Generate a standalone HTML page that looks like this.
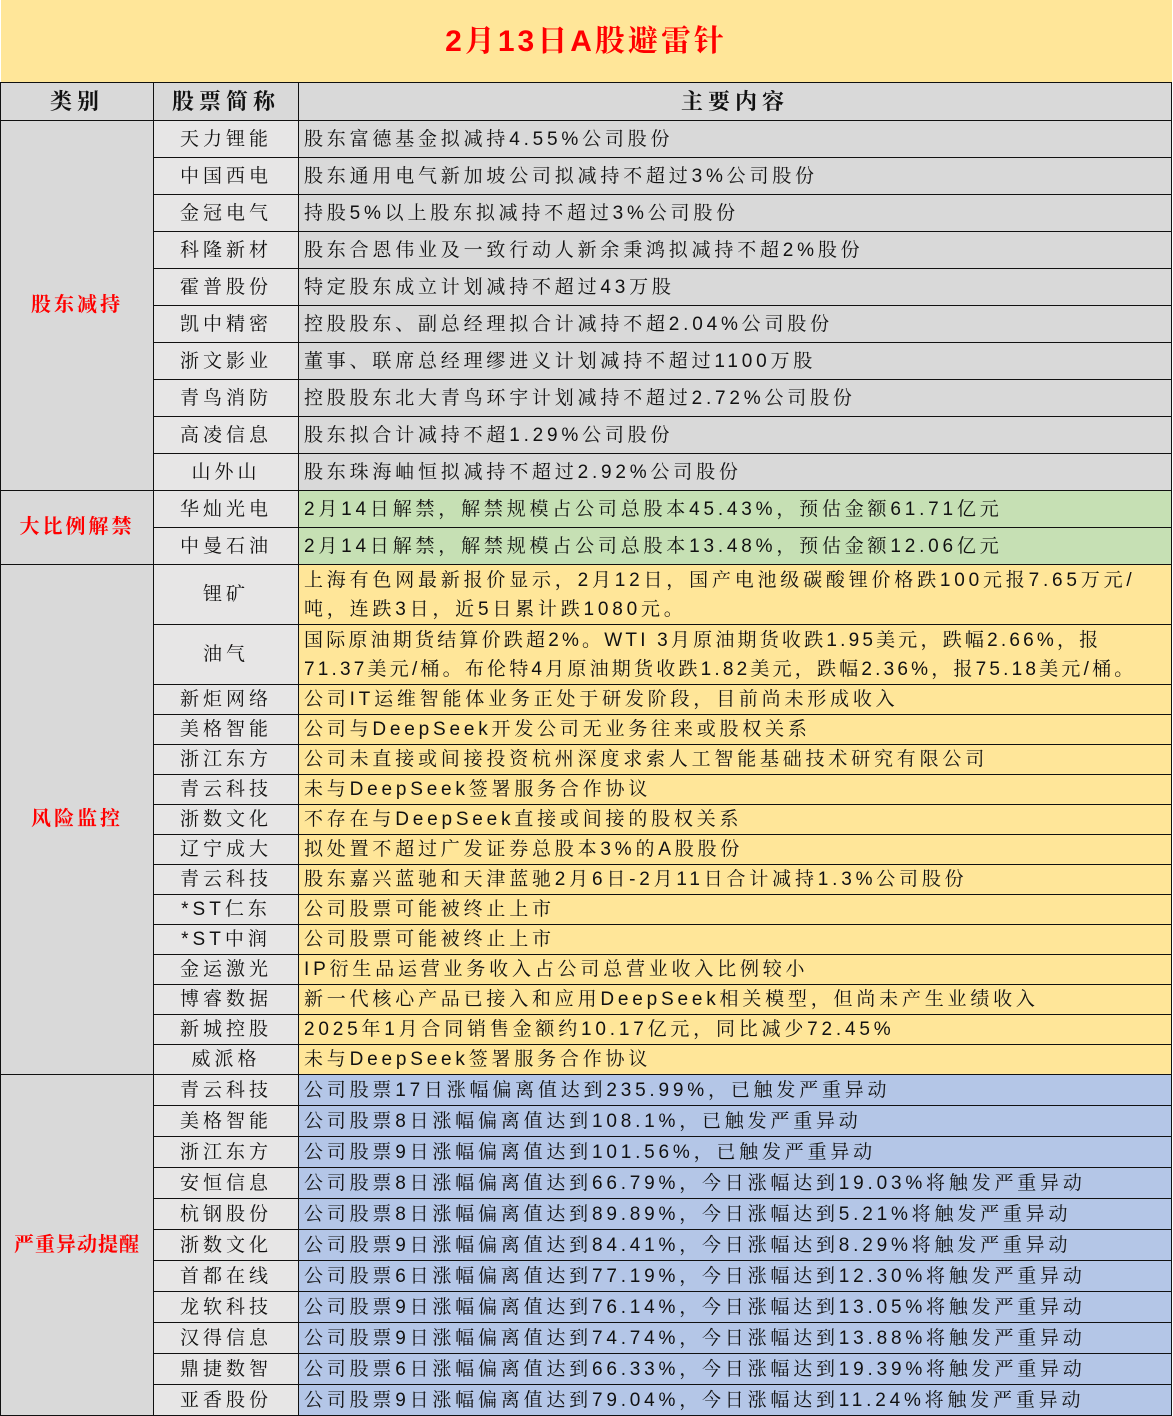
<!DOCTYPE html><html><head><meta charset="utf-8"><style>
body{margin:0;background:#fff;width:1173px;height:1415px;overflow:hidden}
table{border-collapse:collapse;table-layout:fixed;width:1172px;font-family:"Liberation Sans","Noto Serif CJK SC",serif;font-size:19px;color:#111}
td{border:1.5px solid #111;padding:0;white-space:nowrap;overflow:hidden;letter-spacing:3.8px;line-height:29px}
.c1{background:#D9D9D9;color:#f00;font-weight:bold;text-align:center;font-size:20px;letter-spacing:3px}
.c2{background:#E7E6E6;text-align:center;letter-spacing:4px}
.c3{padding-left:5px}
.g{background:#D9D9D9}.gr{background:#C6E0B4}.y{background:#FFE699}.b{background:#B4C6E7}
.t{background:#FFE699;color:#f00;font-weight:bold;font-size:30px;text-align:center;border-top:none;border-left:none;border-right:none;letter-spacing:3px}
.h td{background:#D9D9D9;font-weight:bold;font-size:22px;text-align:center;letter-spacing:5px}
.r37 td{height:36px}.r30 td{height:28.6px}.r31 td{height:30px}.r60 td{height:59px}
</style></head><body><table>
<colgroup><col style="width:153px"><col style="width:145px"><col></colgroup>
<tr><td colspan="3" class="t" style="height:82px">2月13日A股避雷针</td></tr>
<tr class="h"><td style="height:37px">类别</td><td>股票简称</td><td>主要内容</td></tr>
<tr class="r37"><td rowspan="10" class="c1">股东减持</td><td class="c2">天力锂能</td><td class="c3 g">股东富德基金拟减持4.55%公司股份</td></tr>
<tr class="r37"><td class="c2">中国西电</td><td class="c3 g">股东通用电气新加坡公司拟减持不超过3%公司股份</td></tr>
<tr class="r37"><td class="c2">金冠电气</td><td class="c3 g">持股5%以上股东拟减持不超过3%公司股份</td></tr>
<tr class="r37"><td class="c2">科隆新材</td><td class="c3 g">股东合恩伟业及一致行动人新余秉鸿拟减持不超2%股份</td></tr>
<tr class="r37"><td class="c2">霍普股份</td><td class="c3 g">特定股东成立计划减持不超过43万股</td></tr>
<tr class="r37"><td class="c2">凯中精密</td><td class="c3 g">控股股东、副总经理拟合计减持不超2.04%公司股份</td></tr>
<tr class="r37"><td class="c2">浙文影业</td><td class="c3 g">董事、联席总经理缪进义计划减持不超过1100万股</td></tr>
<tr class="r37"><td class="c2">青鸟消防</td><td class="c3 g">控股股东北大青鸟环宇计划减持不超过2.72%公司股份</td></tr>
<tr class="r37"><td class="c2">高凌信息</td><td class="c3 g">股东拟合计减持不超1.29%公司股份</td></tr>
<tr class="r37"><td class="c2">山外山</td><td class="c3 g">股东珠海岫恒拟减持不超过2.92%公司股份</td></tr>
<tr class="r37"><td rowspan="2" class="c1">大比例解禁</td><td class="c2">华灿光电</td><td class="c3 gr">2月14日解禁，解禁规模占公司总股本45.43%，预估金额61.71亿元</td></tr>
<tr class="r37"><td class="c2">中曼石油</td><td class="c3 gr">2月14日解禁，解禁规模占公司总股本13.48%，预估金额12.06亿元</td></tr>
<tr class="r60"><td rowspan="15" class="c1">风险监控</td><td class="c2">锂矿</td><td class="c3 y">上海有色网最新报价显示，2月12日，国产电池级碳酸锂价格跌100元报7.65万元/<br>吨，连跌3日，近5日累计跌1080元。</td></tr>
<tr class="r60"><td class="c2">油气</td><td class="c3 y" style="letter-spacing:3.2px">国际原油期货结算价跌超2%。WTI 3月原油期货收跌1.95美元，跌幅2.66%，报<br>71.37美元/桶。布伦特4月原油期货收跌1.82美元，跌幅2.36%，报75.18美元/桶。</td></tr>
<tr class="r30"><td class="c2">新炬网络</td><td class="c3 y">公司IT运维智能体业务正处于研发阶段，目前尚未形成收入</td></tr>
<tr class="r30"><td class="c2">美格智能</td><td class="c3 y">公司与DeepSeek开发公司无业务往来或股权关系</td></tr>
<tr class="r30"><td class="c2">浙江东方</td><td class="c3 y">公司未直接或间接投资杭州深度求索人工智能基础技术研究有限公司</td></tr>
<tr class="r30"><td class="c2">青云科技</td><td class="c3 y">未与DeepSeek签署服务合作协议</td></tr>
<tr class="r30"><td class="c2">浙数文化</td><td class="c3 y">不存在与DeepSeek直接或间接的股权关系</td></tr>
<tr class="r30"><td class="c2">辽宁成大</td><td class="c3 y">拟处置不超过广发证券总股本3%的A股股份</td></tr>
<tr class="r30"><td class="c2">青云科技</td><td class="c3 y">股东嘉兴蓝驰和天津蓝驰2月6日-2月11日合计减持1.3%公司股份</td></tr>
<tr class="r30"><td class="c2">*ST仁东</td><td class="c3 y">公司股票可能被终止上市</td></tr>
<tr class="r30"><td class="c2">*ST中润</td><td class="c3 y">公司股票可能被终止上市</td></tr>
<tr class="r30"><td class="c2">金运激光</td><td class="c3 y">IP衍生品运营业务收入占公司总营业收入比例较小</td></tr>
<tr class="r30"><td class="c2">博睿数据</td><td class="c3 y">新一代核心产品已接入和应用DeepSeek相关模型，但尚未产生业绩收入</td></tr>
<tr class="r30"><td class="c2">新城控股</td><td class="c3 y">2025年1月合同销售金额约10.17亿元，同比减少72.45%</td></tr>
<tr class="r30"><td class="c2">威派格</td><td class="c3 y">未与DeepSeek签署服务合作协议</td></tr>
<tr class="r31"><td rowspan="11" class="c1" style="letter-spacing:1px">严重异动提醒</td><td class="c2">青云科技</td><td class="c3 b">公司股票17日涨幅偏离值达到235.99%，已触发严重异动</td></tr>
<tr class="r31"><td class="c2">美格智能</td><td class="c3 b">公司股票8日涨幅偏离值达到108.1%，已触发严重异动</td></tr>
<tr class="r31"><td class="c2">浙江东方</td><td class="c3 b">公司股票9日涨幅偏离值达到101.56%，已触发严重异动</td></tr>
<tr class="r31"><td class="c2">安恒信息</td><td class="c3 b">公司股票8日涨幅偏离值达到66.79%，今日涨幅达到19.03%将触发严重异动</td></tr>
<tr class="r31"><td class="c2">杭钢股份</td><td class="c3 b">公司股票8日涨幅偏离值达到89.89%，今日涨幅达到5.21%将触发严重异动</td></tr>
<tr class="r31"><td class="c2">浙数文化</td><td class="c3 b">公司股票9日涨幅偏离值达到84.41%，今日涨幅达到8.29%将触发严重异动</td></tr>
<tr class="r31"><td class="c2">首都在线</td><td class="c3 b">公司股票6日涨幅偏离值达到77.19%，今日涨幅达到12.30%将触发严重异动</td></tr>
<tr class="r31"><td class="c2">龙软科技</td><td class="c3 b">公司股票9日涨幅偏离值达到76.14%，今日涨幅达到13.05%将触发严重异动</td></tr>
<tr class="r31"><td class="c2">汉得信息</td><td class="c3 b">公司股票9日涨幅偏离值达到74.74%，今日涨幅达到13.88%将触发严重异动</td></tr>
<tr class="r31"><td class="c2">鼎捷数智</td><td class="c3 b">公司股票6日涨幅偏离值达到66.33%，今日涨幅达到19.39%将触发严重异动</td></tr>
<tr class="r31"><td class="c2">亚香股份</td><td class="c3 b">公司股票9日涨幅偏离值达到79.04%，今日涨幅达到11.24%将触发严重异动</td></tr>
</table></body></html>
